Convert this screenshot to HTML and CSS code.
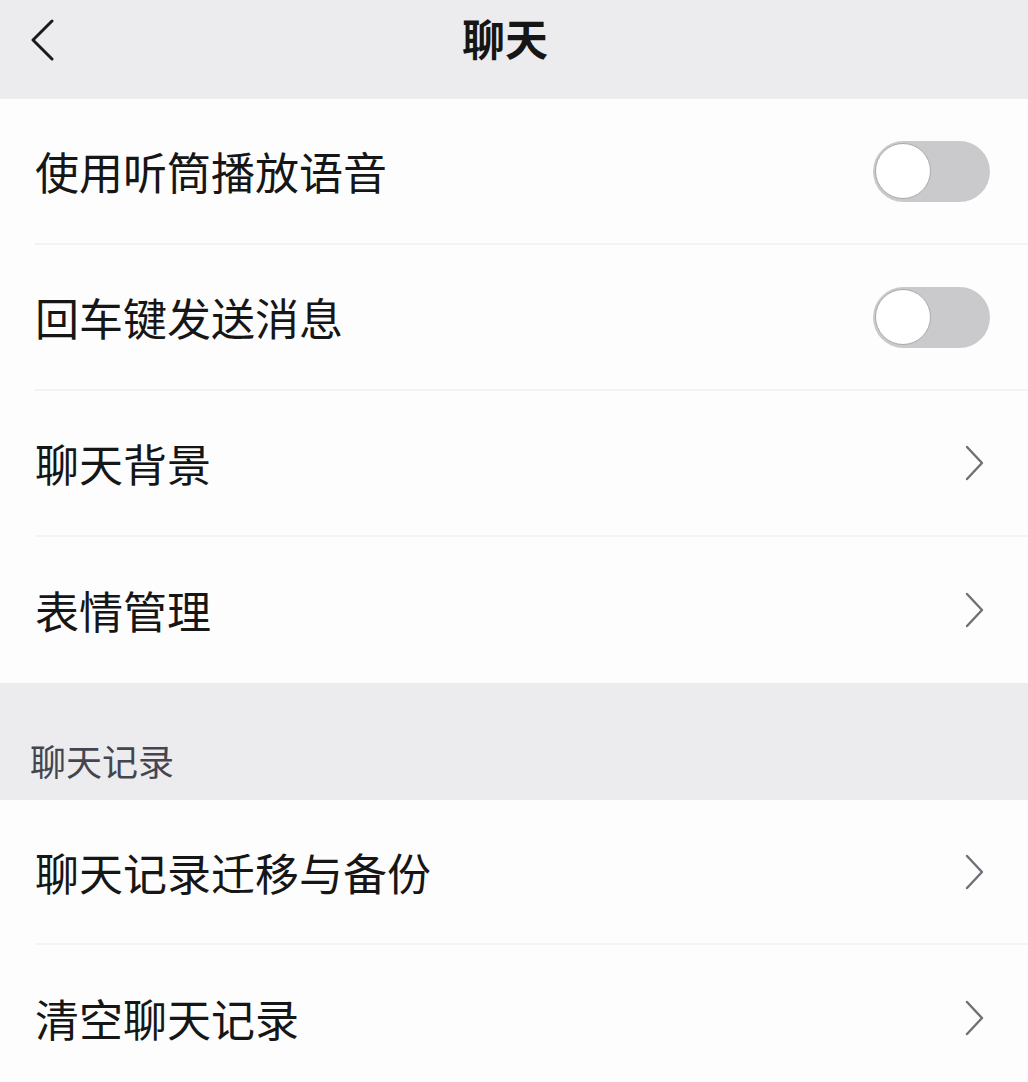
FILE: index.html
```html
<!DOCTYPE html>
<html lang="zh-CN">
<head>
<meta charset="utf-8">
<title>聊天</title>
<link rel="stylesheet" href="styles.css">
</head>
<body>
<div class="page">
  <header class="header">
    <div class="back">
      <svg width="26" height="42" viewBox="0 0 26 42"><path d="M23 2 L4 21 L23 40" fill="none" stroke="#1a1a1a" stroke-width="3" stroke-linecap="round" stroke-linejoin="round"/></svg>
    </div>
    <div class="title">聊天</div>
    <div></div>
  </header>

  <section class="group">
    <div class="row"><span class="label">使用听筒播放语音</span><span class="switch"><span class="knob"></span></span></div>
    <div class="row"><span class="label">回车键发送消息</span><span class="switch"><span class="knob"></span></span></div>
    <div class="row"><span class="label">聊天背景</span><span class="chev"><svg width="20" height="36" viewBox="0 0 20 36"><path d="M2 2 L17 18 L2 34" fill="none" stroke="#6f6f75" stroke-width="2.4" stroke-linecap="round" stroke-linejoin="round"/></svg></span></div>
    <div class="row last"><span class="label">表情管理</span><span class="chev"><svg width="20" height="36" viewBox="0 0 20 36"><path d="M2 2 L17 18 L2 34" fill="none" stroke="#6f6f75" stroke-width="2.4" stroke-linecap="round" stroke-linejoin="round"/></svg></span></div>
  </section>

  <div class="section-title">聊天记录</div>

  <section class="group">
    <div class="row"><span class="label">聊天记录迁移与备份</span><span class="chev"><svg width="20" height="36" viewBox="0 0 20 36"><path d="M2 2 L17 18 L2 34" fill="none" stroke="#6f6f75" stroke-width="2.4" stroke-linecap="round" stroke-linejoin="round"/></svg></span></div>
    <div class="row last"><span class="label">清空聊天记录</span><span class="chev"><svg width="20" height="36" viewBox="0 0 20 36"><path d="M2 2 L17 18 L2 34" fill="none" stroke="#6f6f75" stroke-width="2.4" stroke-linecap="round" stroke-linejoin="round"/></svg></span></div>
  </section>
</div>
</body>
</html>
```

FILE: styles.css
```css
html, body {
  margin: 0;
  padding: 0;
  background: #fdfdfe;
}
body {
  font-family: "Noto Sans CJK SC", "Noto Sans", sans-serif;
  color: #161616;
}
.page {
  width: 1028px;
  min-height: 1082px;
  overflow: hidden;
}
.header {
  height: 99px;
  background: #ececee;
  display: grid;
  grid-template-columns: 1fr auto 1fr;
  align-items: center;
  padding: 0 18px 0 0;
}
.back {
  padding-left: 29px;
  display: flex;
  align-items: center;
  margin-top: -20px;
}
.title {
  font-size: 43px;
  font-weight: 700;
  line-height: 1;
  margin-top: -24px;
}
.group {
  background: #fdfdfe;
}
.row {
  height: 146px;
  box-sizing: border-box;
  margin-left: 35px;
  padding-right: 38px;
  display: flex;
  align-items: center;
  justify-content: space-between;
  border-bottom: 2px solid #f3f3f6;
}
.row.last {
  border-bottom: none;
}
.group:last-child .row {
  height: 145px;
}
.label {
  font-size: 44px;
  line-height: 1;
  margin-top: 0;
}
.switch {
  width: 117px;
  height: 61px;
  border-radius: 31px;
  background: #cacacd;
  display: flex;
  align-items: center;
  padding-left: 2px;
  box-sizing: border-box;
}
.knob {
  width: 56px;
  height: 56px;
  border-radius: 50%;
  background: #ffffff;
  border: 1.5px solid #a9a9ad;
  box-sizing: border-box;
}
.chev {
  display: flex;
  align-items: center;
  margin-right: 5px;
}
.section-title {
  height: 117px;
  background: #ececee;
  box-sizing: border-box;
  padding: 59px 0 0 30px;
  font-size: 36px;
  line-height: 1;
  color: #45454f;
}
```
